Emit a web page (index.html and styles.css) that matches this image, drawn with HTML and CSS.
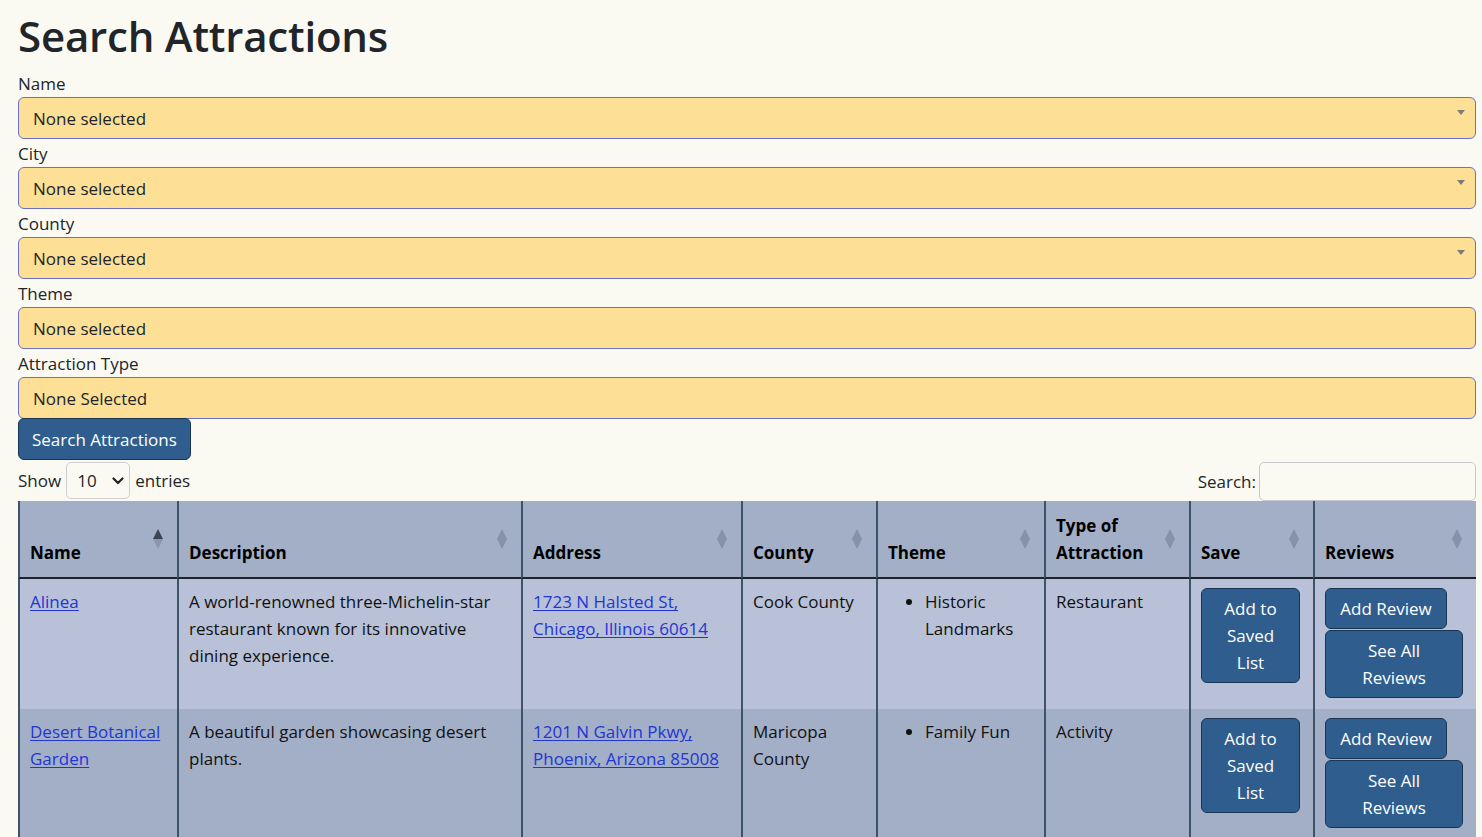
FILE: index.html
```html
<!DOCTYPE html>
<html lang="en">
<head>
<meta charset="utf-8">
<title>Search Attractions</title>
<link rel="stylesheet" href="styles.css">
</head>
<body>
<div class="page">
  <h1 class="title">Search Attractions</h1>
  <form class="filters">
    <div class="field">
      <label class="field-label">Name</label>
      <div class="picker"><span>None selected</span><span class="caret"></span></div>
    </div>
    <div class="field">
      <label class="field-label">City</label>
      <div class="picker"><span>None selected</span><span class="caret"></span></div>
    </div>
    <div class="field">
      <label class="field-label">County</label>
      <div class="picker"><span>None selected</span><span class="caret"></span></div>
    </div>
    <div class="field">
      <label class="field-label">Theme</label>
      <div class="picker"><span>None selected</span></div>
    </div>
    <div class="field">
      <label class="field-label">Attraction Type</label>
      <div class="picker"><span>None Selected</span></div>
    </div>
    <button type="button" class="btn btn-search">Search Attractions</button>
  </form>

  <div class="dt-top">
    <div class="dt-length">
      <span>Show</span>
      <div class="len-select"><span>10</span>
        <svg class="chev" width="12" height="8" viewBox="0 0 12 8"><path d="M1.5 1.5 L6 6 L10.5 1.5" fill="none" stroke="#222" stroke-width="2.2" stroke-linecap="round" stroke-linejoin="round"/></svg>
      </div>
      <span>entries</span>
    </div>
    <div class="dt-search">
      <span>Search:</span>
      <div class="search-input"></div>
    </div>
  </div>

  <table class="results">
    <colgroup>
      <col class="c-name"><col class="c-desc"><col class="c-addr"><col class="c-county"><col class="c-theme"><col class="c-type"><col class="c-save"><col class="c-rev">
    </colgroup>
    <thead>
      <tr>
        <th class="sorted">Name<span class="sort"><i class="up"></i><i class="down"></i></span></th>
        <th>Description<span class="sort"><i class="up"></i><i class="down"></i></span></th>
        <th>Address<span class="sort"><i class="up"></i><i class="down"></i></span></th>
        <th>County<span class="sort"><i class="up"></i><i class="down"></i></span></th>
        <th>Theme<span class="sort"><i class="up"></i><i class="down"></i></span></th>
        <th>Type of Attraction<span class="sort"><i class="up"></i><i class="down"></i></span></th>
        <th>Save<span class="sort"><i class="up"></i><i class="down"></i></span></th>
        <th>Reviews<span class="sort"><i class="up"></i><i class="down"></i></span></th>
      </tr>
    </thead>
    <tbody>
      <tr class="odd">
        <td><a href="#">Alinea</a></td>
        <td>A world-renowned three-Michelin-star restaurant known for its innovative dining experience.</td>
        <td><a href="#">1723 N Halsted St, Chicago, Illinois 60614</a></td>
        <td>Cook County</td>
        <td><ul class="themes"><li>Historic Landmarks</li></ul></td>
        <td>Restaurant</td>
        <td><button type="button" class="btn btn-cell">Add to Saved List</button></td>
        <td class="rev-cell"><button type="button" class="btn btn-cell">Add Review</button><button type="button" class="btn btn-cell btn-wide">See All Reviews</button></td>
      </tr>
      <tr class="even">
        <td><a href="#">Desert Botanical Garden</a></td>
        <td>A beautiful garden showcasing desert plants.</td>
        <td><a href="#">1201 N Galvin Pkwy, Phoenix, Arizona 85008</a></td>
        <td>Maricopa County</td>
        <td><ul class="themes"><li>Family Fun</li></ul></td>
        <td>Activity</td>
        <td><button type="button" class="btn btn-cell">Add to Saved List</button></td>
        <td class="rev-cell"><button type="button" class="btn btn-cell">Add Review</button><button type="button" class="btn btn-cell btn-wide">See All Reviews</button></td>
      </tr>
    </tbody>
  </table>
</div>
</body>
</html>
```

FILE: styles.css
```css
* { box-sizing: border-box; }

html, body {
  margin: 0;
  padding: 0;
  background: #fbfaf2;
}

body {
  font-family: "Open Sans", "Noto Sans", "Liberation Sans", sans-serif;
  font-size: 17px;
  line-height: 27px;
  color: #212529;
  height: 837px;
  overflow: hidden;
}

.page {
  padding: 9px 6px 0 18px;
}

.title {
  margin: 0 0 8px 0;
  font-size: 42px;
  line-height: 53px;
  font-weight: 600;
  letter-spacing: -0.2px;
  color: #212529;
}

.filters {
  display: flex;
  flex-direction: column;
}

.field {
  display: flex;
  flex-direction: column;
}

.field-label {
  line-height: 27px;
}

.picker {
  height: 42px;
  background: #fde096;
  border: 1px solid #6b70c6;
  border-radius: 6px;
  padding: 0 14px;
  display: flex;
  align-items: center;
  justify-content: space-between;
  margin-bottom: 1px;
}

.caret {
  width: 0;
  height: 0;
  border-left: 4.5px solid transparent;
  border-right: 4.5px solid transparent;
  border-top: 5px solid #7b7b7b;
  margin-right: -4px;
  margin-top: -12px;
}

.btn {
  font-family: inherit;
  font-size: 17px;
  line-height: 27px;
  color: #fff;
  background: #2f5e8e;
  border: 1px solid #1a3554;
  border-radius: 6px;
  padding: 7px 13px;
  cursor: pointer;
}

.btn-search {
  align-self: flex-start;
  height: 42px;
  margin-top: -2px;
}

.dt-top {
  display: flex;
  justify-content: space-between;
  align-items: center;
  height: 41px;
}

.dt-length {
  display: flex;
  align-items: center;
  gap: 4px;
}

.len-select {
  width: 64px;
  height: 37px;
  border: 1px solid #cfcfcf;
  border-radius: 5px;
  background: #fbfaf2;
  display: flex;
  align-items: center;
  justify-content: space-between;
  padding: 0 5px 0 10px;
  margin: 0 1px;
}

.dt-search {
  display: flex;
  align-items: center;
  gap: 3px;
  padding-top: 2px;
}

.search-input {
  width: 217px;
  height: 39px;
  border: 1px solid #c8c8c8;
  border-radius: 5px;
  background: #fbfaf2;
}

.results {
  width: 1458px;
  table-layout: fixed;
  border-collapse: separate;
  border-spacing: 0;
}

.c-name { width: 159px; }
.c-desc { width: 344px; }
.c-addr { width: 220px; }
.c-county { width: 135px; }
.c-theme { width: 168px; }
.c-type { width: 145px; }
.c-save { width: 124px; }
.c-rev { width: 163px; }

.results th,
.results td {
  border-left: 2px solid #3e5369;
  padding: 9px 12px 10px 10px;
  text-align: left;
}

.results th {
  position: relative;
  background: #a3afc6;
  font-weight: 700;
  vertical-align: bottom;
  height: 78px;
  padding-bottom: 11px;
  padding-right: 28px;
  border-bottom: 2px solid #1d232b;
  color: #000;
}

.results td {
  vertical-align: top;
  color: #111;
}

.results tr.odd td { background: #b8c1d7; height: 130px; }
.results tr.even td { background: #a3afc6; }

.results a {
  color: #2236d4;
  text-decoration: underline;
  text-underline-offset: 2px;
}

.sort {
  position: absolute;
  right: 14px;
  top: 28px;
  display: flex;
  flex-direction: column;
  align-items: center;
}

.sort i {
  display: block;
  width: 0;
  height: 0;
  border-left: 5px solid transparent;
  border-right: 5px solid transparent;
}

.sort .up { border-bottom: 10px solid #8791ab; }
.sort .down { border-top: 10px solid #8791ab; }

.sorted .sort .up { border-bottom-color: #3b4354; }
.sorted .sort .down { border-top-color: #8c96b0; }

.themes {
  margin: 0;
  padding-left: 37px;
}

.btn-cell {
  display: block;
  text-align: center;
  padding: 6px 12px;
  margin: 0;
}

.results tr td:nth-child(7) .btn-cell { width: 99px; }

.rev-cell .btn-cell:first-child { width: 122px; }
.rev-cell .btn-wide { width: 138px; margin-top: 1px; }
```
